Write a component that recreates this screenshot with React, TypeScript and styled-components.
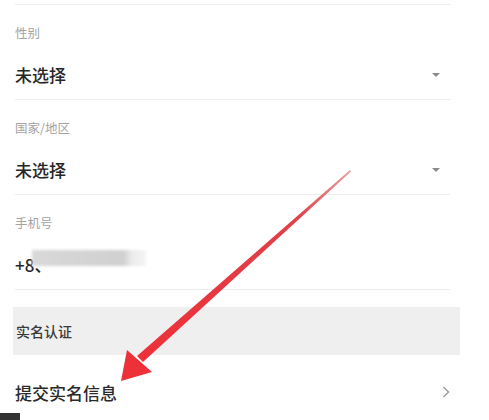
import styled, { createGlobalStyle } from "styled-components";

const GlobalStyle = createGlobalStyle`
  html, body {
    margin: 0;
    padding: 0;
    background: #ffffff;
  }
  body {
    font-family: "Noto Sans CJK SC", "Noto Sans", sans-serif;
  }
`;

const Page = styled.div`
  position: relative;
  width: 489px;
  height: 420px;
  overflow: hidden;
  background: #fff;
  padding-top: 4px;
  box-sizing: border-box;
`;

const Divider = styled.div`
  height: 1px;
  margin: 0 39px 0 15px;
  background: #ececec;
`;

const Field = styled.div`
  display: flex;
  flex-direction: column;
  padding: 18px 39px 0 15px;
`;

const Label = styled.div`
  font-size: 12.5px;
  line-height: 20px;
  color: #a3a3a3;
`;

const ValueRow = styled.div`
  display: flex;
  align-items: center;
  justify-content: space-between;
  height: 24px;
  margin: 20px 0 12px;
`;

const Value = styled.div`
  position: relative;
  font-size: 17px;
  font-weight: 500;
  line-height: 24px;
  color: #262626;
`;

const Caret = styled.div`
  width: 0;
  height: 0;
  margin-right: 10px;
  border-left: 4px solid transparent;
  border-right: 4px solid transparent;
  border-top: 4px solid #8a8a8a;
`;

const Mosaic = styled.span`
  position: absolute;
  left: 17px;
  top: -3px;
  width: 114px;
  height: 16px;
  background: linear-gradient(90deg, #d8d8d8 0%, #d0d0d0 80%, #ececec 88%, #f4f4f4 100%);
  filter: blur(1.5px);
`;

const Section = styled.div`
  display: flex;
  align-items: center;
  height: 48px;
  margin: 17px 29px 0 13px;
  padding-left: 3px;
  background: #efefef;
  font-size: 14px;
  font-weight: 500;
  color: #3a3a3a;
`;

const LinkRow = styled.div`
  display: flex;
  align-items: center;
  justify-content: space-between;
  height: 24px;
  margin: 25px 39px 0 15px;
  font-size: 17px;
  font-weight: 500;
  color: #2a2a2a;
`;

const Chevron = styled.svg`
  width: 8px;
  height: 12px;
`;

const Corner = styled.div`
  position: absolute;
  left: 0;
  bottom: 0;
  width: 20px;
  height: 7px;
  background: #333;
`;

const Arrow = styled.svg`
  position: absolute;
  left: 0;
  top: 0;
  width: 489px;
  height: 420px;
  pointer-events: none;
`;

const fields = [
  { label: "性别", value: "未选择", select: true },
  { label: "国家/地区", value: "未选择", select: true },
  { label: "手机号", value: "+8、", select: false },
];

const App = () => {
  return (
    <>
      <GlobalStyle />
      <Page>
        <Divider />
        {fields.map((f) => (
          <div key={f.label}>
            <Field>
              <Label>{f.label}</Label>
              <ValueRow>
                <Value>
                  {f.value}
                  {!f.select && <Mosaic />}
                </Value>
                {f.select && <Caret />}
              </ValueRow>
            </Field>
            <Divider />
          </div>
        ))}
        <Section>实名认证</Section>
        <LinkRow>
          <span>提交实名信息</span>
          <Chevron viewBox="0 0 8 12">
            <path d="M1.5 1 L6.5 6 L1.5 11" fill="none" stroke="#9a9a9a" strokeWidth="1.4" />
          </Chevron>
        </LinkRow>
        <Arrow viewBox="0 0 489 420">
          <defs>
            <linearGradient id="shaft" x1="350" y1="170" x2="140" y2="360" gradientUnits="userSpaceOnUse">
              <stop offset="0" stopColor="#e8a0a0" />
              <stop offset="0.25" stopColor="#e0404a" />
              <stop offset="1" stopColor="#ee3038" />
            </linearGradient>
          </defs>
          <polygon points="350,170 351,171.5 143,362 137,356" fill="url(#shaft)" />
          <polygon points="121,381 127,350 152,372" fill="#ee3038" />
        </Arrow>
        <Corner />
      </Page>
    </>
  );
};

export default App;
